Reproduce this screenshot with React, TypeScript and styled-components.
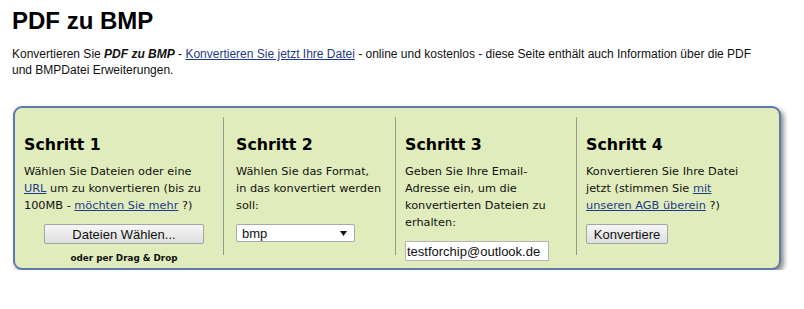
import styled, { createGlobalStyle } from 'styled-components';

const GlobalStyle = createGlobalStyle`
  body {
    margin: 0;
    background: #ffffff;
    font-family: 'Liberation Sans', Arial, sans-serif;
    color: #000000;
  }
`;

const Page = styled.div`
  padding: 0 12px;
`;

const Title = styled.h1`
  margin: 7px 0 0;
  font-size: 24px;
  line-height: 28px;
  font-weight: 700;
  color: #000;
`;

const Intro = styled.p`
  margin: 11px 0 0;
  width: 755px;
  font-size: 12px;
  line-height: 16px;
  color: #111;
`;

const Emph = styled.strong`
  font-style: italic;
`;

const IntroLink = styled.a`
  color: #1f3a8a;
  text-decoration: underline;
`;

const StepBox = styled.div`
  box-sizing: border-box;
  display: grid;
  grid-template-columns: 208px 172px 181px 1fr;
  width: 768px;
  height: 164px;
  margin: 28px 0 0 1px;
  padding: 9px 0 0;
  background: #e0ecbb;
  border: 2px solid #5f79a8;
  border-radius: 9px;
  box-shadow: 3px 3px 5px rgba(0, 0, 0, 0.45);
`;

const Step = styled.div<{ $first?: boolean; $pad: number }>`
  box-sizing: border-box;
  height: 138px;
  padding: 17.5px 0 0 ${({ $pad }) => `${$pad}px`};
  border-left: ${({ $first }) => ($first ? 'none' : '1px solid #9a9a8a')};
  font-family: 'DejaVu Sans', Verdana, sans-serif;
  color: #111;
`;

const StepTitle = styled.h2`
  margin: 0;
  font-size: 15.8px;
  line-height: 20px;
  font-weight: 700;
  color: #000;
`;

const StepText = styled.p`
  margin: 8px 0 0;
  font-size: 11.3px;
  line-height: 17px;
  white-space: nowrap;
`;

const StepLink = styled.a`
  color: #1f3a8a;
  text-decoration: underline;
`;

const Controls = styled.div<{ $center?: boolean }>`
  display: flex;
  flex-direction: column;
  align-items: ${({ $center }) => ($center ? 'center' : 'flex-start')};
  width: ${({ $center }) => ($center ? '200px' : 'auto')};
  margin-top: 10.5px;
`;

const GrayButton = styled.button<{ $width: number }>`
  box-sizing: border-box;
  width: ${({ $width }) => `${$width}px`};
  height: 20px;
  padding: 0;
  font-family: 'Liberation Sans', Arial, sans-serif;
  font-size: 13px;
  color: #111;
  background: linear-gradient(#f6f6f6, #dedede);
  border: 1px solid #a4a4a4;
  border-radius: 2px;
`;

const DropHint = styled.div`
  margin-top: 9px;
  font-size: 8.8px;
  font-weight: 700;
  color: #111;
`;

const FakeSelect = styled.div`
  box-sizing: border-box;
  display: flex;
  align-items: center;
  justify-content: space-between;
  width: 119px;
  height: 18px;
  padding: 0 7px 0 5px;
  font-family: 'Liberation Sans', Arial, sans-serif;
  font-size: 13px;
  color: #111;
  background: #fff;
  border: 1px solid #a9a9a9;
  border-radius: 2px;
`;

const EmailInput = styled.input`
  box-sizing: border-box;
  width: 144px;
  height: 20px;
  padding: 0 1px;
  font-family: 'Liberation Sans', Arial, sans-serif;
  font-size: 13px;
  color: #111;
  background: #fff;
  border: 1px solid #b4b4b4;
  outline: none;
`;

const App = () => (
  <>
    <GlobalStyle />
    <Page>
      <Title>PDF zu BMP</Title>
      <Intro>
        Konvertieren Sie <Emph>PDF zu BMP</Emph> -{' '}
        <IntroLink href="#">Konvertieren Sie jetzt Ihre Datei</IntroLink> - online und
        kostenlos - diese Seite enthält auch Information über die PDF und BMPDatei
        Erweiterungen.
      </Intro>

      <StepBox>
        <Step $first $pad={9}>
          <StepTitle>Schritt 1</StepTitle>
          <StepText>
            Wählen Sie Dateien oder eine
            <br />
            <StepLink href="#">URL</StepLink> um zu konvertieren (bis zu
            <br />
            100MB - <StepLink href="#">möchten Sie mehr</StepLink> ?)
          </StepText>
          <Controls $center>
            <GrayButton $width={160}>Dateien Wählen...</GrayButton>
            <DropHint>oder per Drag &amp; Drop</DropHint>
          </Controls>
        </Step>

        <Step $pad={12}>
          <StepTitle>Schritt 2</StepTitle>
          <StepText>
            Wählen Sie das Format,
            <br />
            in das konvertiert werden
            <br />
            soll:
          </StepText>
          <Controls>
            <FakeSelect>
              <span>bmp</span>
              <svg width="7" height="5" viewBox="0 0 7 5">
                <path d="M0 0h7L3.5 5z" fill="#111" />
              </svg>
            </FakeSelect>
          </Controls>
        </Step>

        <Step $pad={9}>
          <StepTitle>Schritt 3</StepTitle>
          <StepText>
            Geben Sie Ihre Email-
            <br />
            Adresse ein, um die
            <br />
            konvertierten Dateien zu
            <br />
            erhalten:
          </StepText>
          <Controls>
            <EmailInput readOnly value="testforchip@outlook.de" />
          </Controls>
        </Step>

        <Step $pad={9}>
          <StepTitle>Schritt 4</StepTitle>
          <StepText>
            Konvertieren Sie Ihre Datei
            <br />
            jetzt (stimmen Sie <StepLink href="#">mit</StepLink>
            <br />
            <StepLink href="#">unseren AGB überein</StepLink> ?)
          </StepText>
          <Controls>
            <GrayButton $width={82}>Konvertiere</GrayButton>
          </Controls>
        </Step>
      </StepBox>
    </Page>
  </>
);

export default App;
